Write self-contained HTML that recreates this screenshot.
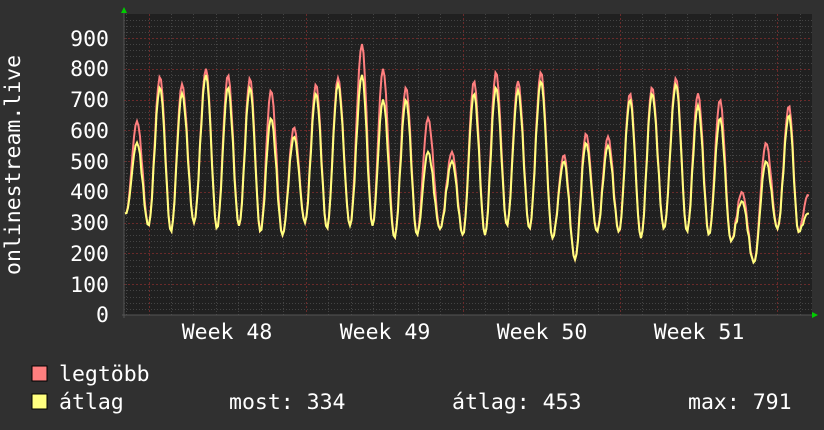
<!DOCTYPE html>
<html><head><meta charset="utf-8">
<style>
body{margin:0;width:824px;height:430px;background:#303030;overflow:hidden;font-family:"DejaVu Sans Mono","Liberation Mono",monospace;}
svg{display:block}
text{font-family:"DejaVu Sans Mono","Liberation Mono",monospace;fill:#fff;font-size:21.5px}
</style></head><body>
<svg id="g" width="824" height="430" xmlns="http://www.w3.org/2000/svg">
<rect width="824" height="430" fill="#303030"/>
<rect x="124" y="14" width="688" height="301" fill="#202020"/>
<g id="grid"></g>
<g id="data"></g>
<line x1="122" y1="315" x2="816" y2="315" stroke="#555" stroke-width="1"/>
<line x1="124" y1="12" x2="124" y2="318" stroke="#555" stroke-width="1"/>
<polygon points="121,13 124,7 127,13" fill="#0c0"/>
<polygon points="812,312 818,315 812,318" fill="#0c0"/>
<g text-anchor="end">
<text x="109" y="46">900</text><text x="109" y="76">800</text><text x="109" y="107">700</text>
<text x="109" y="138">600</text><text x="109" y="169">500</text><text x="109" y="199">400</text>
<text x="109" y="230">300</text><text x="109" y="261">200</text><text x="109" y="292">100</text>
<text x="109" y="322">0</text>
</g>
<text transform="translate(20,275) rotate(-90)">onlinestream.live</text>
<g text-anchor="middle">
<text x="227" y="339">Week 48</text><text x="385" y="339">Week 49</text>
<text x="542" y="339">Week 50</text><text x="699" y="339">Week 51</text>
</g>
<rect x="32" y="366" width="15" height="15" fill="#ff7f7f" stroke="#000"/>
<rect x="32" y="394" width="15" height="15" fill="#ffff7f" stroke="#000"/>
<text x="59" y="381">legtöbb</text>
<text x="59" y="409">átlag</text>
<text x="229" y="409">most: 334</text>
<text x="452" y="409">átlag: 453</text>
<text x="688" y="409">max: 791</text>
</svg>
<script>
var NS="http://www.w3.org/2000/svg",grid=document.getElementById('grid'),data=document.getElementById('data');
function L(x1,y1,x2,y2,c,d){var l=document.createElementNS(NS,'line');l.setAttribute('x1',x1);l.setAttribute('y1',y1);l.setAttribute('x2',x2);l.setAttribute('y2',y2);l.setAttribute('stroke',c);l.setAttribute('stroke-dasharray',d);l.setAttribute('stroke-width',1);grid.appendChild(l);}
function Y(v){return 315-v*0.3078;}
for(var v=20;v<980;v+=20){var y=Math.round(Y(v))+0.5;if(v%100==0)L(124,y,812,y,'#6a2a2a','2,2');else L(124,y,812,y,'#444','1,2');}
for(var x=148.5-22.45;x<812;x+=22.45){var xx=Math.round(x)+0.5;var maj=Math.abs(((x-148.5)/157.15)-Math.round((x-148.5)/157.15))<0.02;L(xx,14,xx,315,maj?'#6a2a2a':'#444',maj?'2,2':'1,2');}
var pk=[[137,630,560],[160,775,740],[182,750,720],[206,800,780],[228,780,740],[250,770,740],[271,730,640],[294,610,580],[316,750,720],[338,770,750],[362,880,780],[383,800,700],[406,740,700],[428,640,530],[452,530,500],[474,760,720],[496,790,740],[518,760,730],[541,790,760],[564,520,500],[586,590,560],[608,580,550],[630,720,700],[652,740,720],[676,770,750],[698,720,680],[720,700,640],[742,400,370],[766,560,500],[789,680,650],[808,390,330]];
var tr=[330,290,270,300,280,290,270,260,300,280,290,290,250,260,280,260,260,290,280,250,180,270,270,250,280,270,260,240,170,280,270];
function sh(w){return (1-Math.cos(Math.PI*w))/2;}
function val(x,k){var i=0;while(i<pk.length-1&&pk[i+1][0]<x)i++;var a=pk[i],b=pk[i+1]||pk[i];var base,top;
 if(x<a[0]){var t=(a[0]-x)/11;top=a[k];base=tr[i];return base+(top-base)*sh(Math.max(0,1-t));}
 var span=b[0]-a[0]||22,t=(x-a[0])/span;base=tr[i+1]||tr[i];
 var w=t<0.5?1-t*2:(t-0.5)*2; var topv=t<0.5?a[k]:b[k];
 var s=sh(w); var n=Math.sin(x*2.3)*25*(1+k*0.4);
 return base+(topv-base)*s+n*s*(1-s);}
function path(k,c){var d='';for(var x=125;x<=810;x+=1.5){d+=(x==125?'M':'L')+x.toFixed(1)+','+Y(val(x,k)).toFixed(1);}var p=document.createElementNS(NS,'path');p.setAttribute('d',d);p.setAttribute('fill','none');p.setAttribute('stroke',c);p.setAttribute('stroke-width',2);data.appendChild(p);}
path(1,'#ff7f7f');path(2,'#ffff7f');
</script>
</body></html>
